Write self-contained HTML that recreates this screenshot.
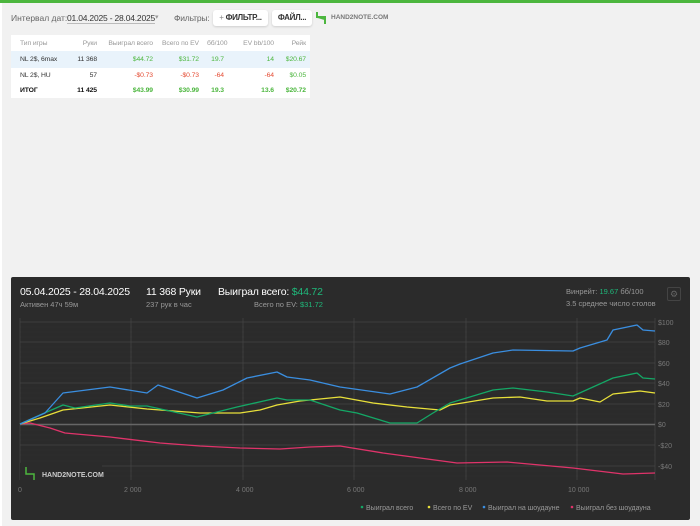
<!DOCTYPE html>
<html><head><meta charset="utf-8"><style>
*{margin:0;padding:0;box-sizing:border-box}
body{width:700px;height:526px;background:#f1f1f1;font-family:"Liberation Sans","DejaVu Sans",sans-serif;position:relative;overflow:hidden}
.lb{position:absolute;left:0;top:0;width:2px;height:526px;background:#fff}
.top{position:absolute;left:0;top:0;width:700px;height:3px;background:#4cb63e}
.t{position:absolute;white-space:nowrap}
.btn{position:absolute;background:#fff;border-radius:3px;box-shadow:0 1px 2px rgba(0,0,0,.15);font-size:8px;font-weight:bold;color:#333;text-align:center;line-height:16px;height:16px;white-space:nowrap}
table{position:absolute;left:11px;top:35px;width:299px;background:#fff;border-collapse:collapse;font-size:6.8px;table-layout:fixed;letter-spacing:-0.1px}
td{padding:0 4px;text-align:right;height:15px;color:#333;white-space:nowrap;overflow:hidden}
td:first-child{text-align:left;padding-left:9px}
tr.h td{color:#999;height:16px}
tr.s td{background:#e9f3fb;height:17px}
.g{color:#4cb63e!important}.r{color:#e44c34!important}
tr.b td{font-weight:bold;color:#111}
.panel{position:absolute;left:11px;top:277px;width:679px;height:243px;background:#2b2b2b;border-radius:2px;color:#ddd}
</style></head><body>
<div class="lb"></div>
<div class="top"></div>
<div class="t" style="left:11px;top:13px;font-size:8.5px;color:#666">Интервал дат:</div>
<div class="t" style="left:67px;top:13px;font-size:8.5px;color:#333;border-bottom:1px solid #bbb;letter-spacing:-0.2px">01.04.2025 - 28.04.2025</div>
<div class="t" style="left:155px;top:13px;font-size:7px;color:#999">▾</div>
<div class="t" style="left:174px;top:13px;font-size:8.5px;color:#666;letter-spacing:-0.2px">Фильтры:</div>
<div class="btn" style="left:213px;top:10px;width:55px;letter-spacing:-0.3px"><span style="font-weight:normal;color:#888">+</span> ФИЛЬТР...</div>
<div class="btn" style="left:272px;top:10px;width:40px;letter-spacing:-0.3px">ФАЙЛ...</div>
<svg class="t" style="left:315px;top:11px" width="12" height="14"><path d="M2 1v5h8v7M2 6c3 0 5 2 8 2" stroke="#4cb63e" stroke-width="2" fill="none"/></svg>
<div class="t" style="left:331px;top:14px;font-size:6.5px;font-weight:bold;color:#777">HAND2NOTE.COM</div>
<table>
<colgroup><col style="width:55px"><col style="width:35px"><col style="width:56px"><col style="width:46px"><col style="width:25px"><col style="width:50px"><col style="width:32px"></colgroup>
<tr class="h"><td>Тип игры</td><td>Руки</td><td>Выиграл всего</td><td>Всего по EV</td><td>бб/100</td><td>EV bb/100</td><td>Рейк</td></tr>
<tr class="s"><td>NL 2$, 6max</td><td>11 368</td><td class="g">$44.72</td><td class="g">$31.72</td><td class="g">19.7</td><td class="g">14</td><td class="g">$20.67</td></tr>
<tr><td>NL 2$, HU</td><td>57</td><td class="r">-$0.73</td><td class="r">-$0.73</td><td class="r">-64</td><td class="r">-64</td><td class="g">$0.05</td></tr>
<tr class="b"><td>ИТОГ</td><td>11 425</td><td class="g">$43.99</td><td class="g">$30.99</td><td class="g">19.3</td><td class="g">13.6</td><td class="g">$20.72</td></tr>
</table>
<div class="panel">
<div class="t" style="left:9px;top:9px;font-size:10.5px;color:#fff;letter-spacing:-0.2px">05.04.2025 - 28.04.2025</div>
<div class="t" style="left:9px;top:23px;font-size:7.5px;color:#999">Активен 47ч 59м</div>
<div class="t" style="left:135px;top:9px;font-size:10.5px;color:#fff;letter-spacing:-0.2px">11 368 Руки</div>
<div class="t" style="left:135px;top:23px;font-size:7.5px;color:#999">237 рук в час</div>
<div class="t" style="left:207px;top:9px;font-size:10.5px;color:#fff;letter-spacing:-0.2px">Выиграл всего: <span style="color:#1fb87a">$44.72</span></div>
<div class="t" style="left:243px;top:23px;font-size:7.5px;color:#999">Всего по EV: <span style="color:#1fb87a">$31.72</span></div>
<div class="t" style="left:555px;top:10px;font-size:7.5px;color:#999">Винрейт: <span style="color:#1fb87a">19.67</span> бб/100</div>
<div class="t" style="left:555px;top:22px;font-size:7.5px;color:#999">3.5 среднее число столов</div>
<div class="t" style="left:656px;top:10px;width:14px;height:14px;border:1px solid #444;border-radius:2px;color:#666;font-size:9px;text-align:center;line-height:12px">⚙</div>
</div>
<svg class="t" style="left:0;top:0" width="700" height="526">
<g stroke="#333" stroke-width="0.6">
<line x1="20" x2="655" y1="327" y2="327"/><line x1="20" x2="655" y1="332" y2="332"/><line x1="20" x2="655" y1="337" y2="337"/>
<line x1="20" x2="655" y1="347" y2="347"/><line x1="20" x2="655" y1="352" y2="352"/><line x1="20" x2="655" y1="357" y2="357"/>
<line x1="20" x2="655" y1="368" y2="368"/><line x1="20" x2="655" y1="373" y2="373"/><line x1="20" x2="655" y1="378" y2="378"/>
<line x1="20" x2="655" y1="388" y2="388"/><line x1="20" x2="655" y1="393" y2="393"/><line x1="20" x2="655" y1="398" y2="398"/>
<line x1="20" x2="655" y1="409" y2="409"/><line x1="20" x2="655" y1="414" y2="414"/><line x1="20" x2="655" y1="419" y2="419"/>
<line x1="20" x2="655" y1="430" y2="430"/><line x1="20" x2="655" y1="435" y2="435"/><line x1="20" x2="655" y1="440" y2="440"/>
<line x1="20" x2="655" y1="450" y2="450"/><line x1="20" x2="655" y1="455" y2="455"/><line x1="20" x2="655" y1="461" y2="461"/>
<line x1="20" x2="655" y1="471" y2="471"/><line x1="20" x2="655" y1="476" y2="476"/>
</g>
<g stroke="#444" stroke-width="0.8">
<line x1="20" x2="655" y1="322" y2="322"/><line x1="20" x2="655" y1="342" y2="342"/><line x1="20" x2="655" y1="363" y2="363"/><line x1="20" x2="655" y1="383" y2="383"/><line x1="20" x2="655" y1="404" y2="404"/><line x1="20" x2="655" y1="445" y2="445"/><line x1="20" x2="655" y1="466" y2="466"/>
<line x1="20" x2="20" y1="318" y2="480"/><line x1="131" x2="131" y1="318" y2="480"/><line x1="243" x2="243" y1="318" y2="480"/><line x1="354" x2="354" y1="318" y2="480"/><line x1="466" x2="466" y1="318" y2="480"/><line x1="577" x2="577" y1="318" y2="480"/><line x1="655" x2="655" y1="318" y2="480"/>
</g>
<line x1="20" x2="655" y1="424.5" y2="424.5" stroke="#666" stroke-width="1.5"/>
<g fill="none" stroke-width="1.3" stroke-linejoin="round">
<polyline stroke="#e0336a" points="20,424 30,423 50,428 65,433 110,437 160,443 200,446 240,448 280,449 310,447 340,446 383,453 457,463 507,462 573,468 623,474 655,473"/>
<polyline stroke="#e8e03a" points="20,424 40,418 63,410 110,405 147,409 200,413 240,413 260,410 277,405 300,401 340,397 373,403 407,407 440,410 450,405 493,398 520,397 547,401 573,401 580,398 600,402 613,394 640,391 655,393"/>
<polyline stroke="#14a866" points="20,424 40,415 63,405 75,408 110,403 130,406 147,406 197,417 237,407 277,398 287,400 310,400 340,410 357,413 390,423 417,423 433,413 450,403 493,390 513,388 547,392 573,396 593,387 613,378 637,373 643,378 655,379"/>
<polyline stroke="#3a8ee0" points="20,424 45,413 63,393 110,387 147,393 158,385 197,398 223,390 247,378 277,372 287,377 310,380 340,387 390,394 417,387 450,368 460,364 493,353 513,350 573,351 580,348 607,340 613,330 637,325 643,330 655,331"/>
</g>
<g font-size="7" fill="#777" font-family="Liberation Sans,sans-serif">
<text x="658" y="325">$100</text><text x="658" y="345">$80</text><text x="658" y="366">$60</text><text x="658" y="386">$40</text><text x="658" y="407">$20</text><text x="658" y="427">$0</text><text x="658" y="448">-$20</text><text x="658" y="469">-$40</text>
<text x="18" y="492">0</text><text x="124" y="492">2 000</text><text x="236" y="492">4 000</text><text x="347" y="492">6 000</text><text x="459" y="492">8 000</text><text x="568" y="492">10 000</text>
</g>
<rect x="20" y="463" width="82" height="20" fill="#2b2b2b"/>
<path d="M26 467v7h8v6" stroke="#4cb63e" stroke-width="1.5" fill="none"/>
<text x="42" y="477" font-size="7" font-weight="bold" fill="#ccc" font-family="Liberation Sans,sans-serif">HAND2NOTE.COM</text>
<g font-size="7" fill="#999" font-family="Liberation Sans,sans-serif">
<circle cx="362" cy="507" r="1.3" fill="#14a866"/><text x="366" y="510">Выиграл всего</text>
<circle cx="429" cy="507" r="1.3" fill="#e8e03a"/><text x="433" y="510">Всего по EV</text>
<circle cx="484" cy="507" r="1.3" fill="#3a8ee0"/><text x="488" y="510">Выиграл на шоудауне</text>
<circle cx="572" cy="507" r="1.3" fill="#e0336a"/><text x="576" y="510">Выиграл без шоудауна</text>
</g>
</svg>
</body></html>
